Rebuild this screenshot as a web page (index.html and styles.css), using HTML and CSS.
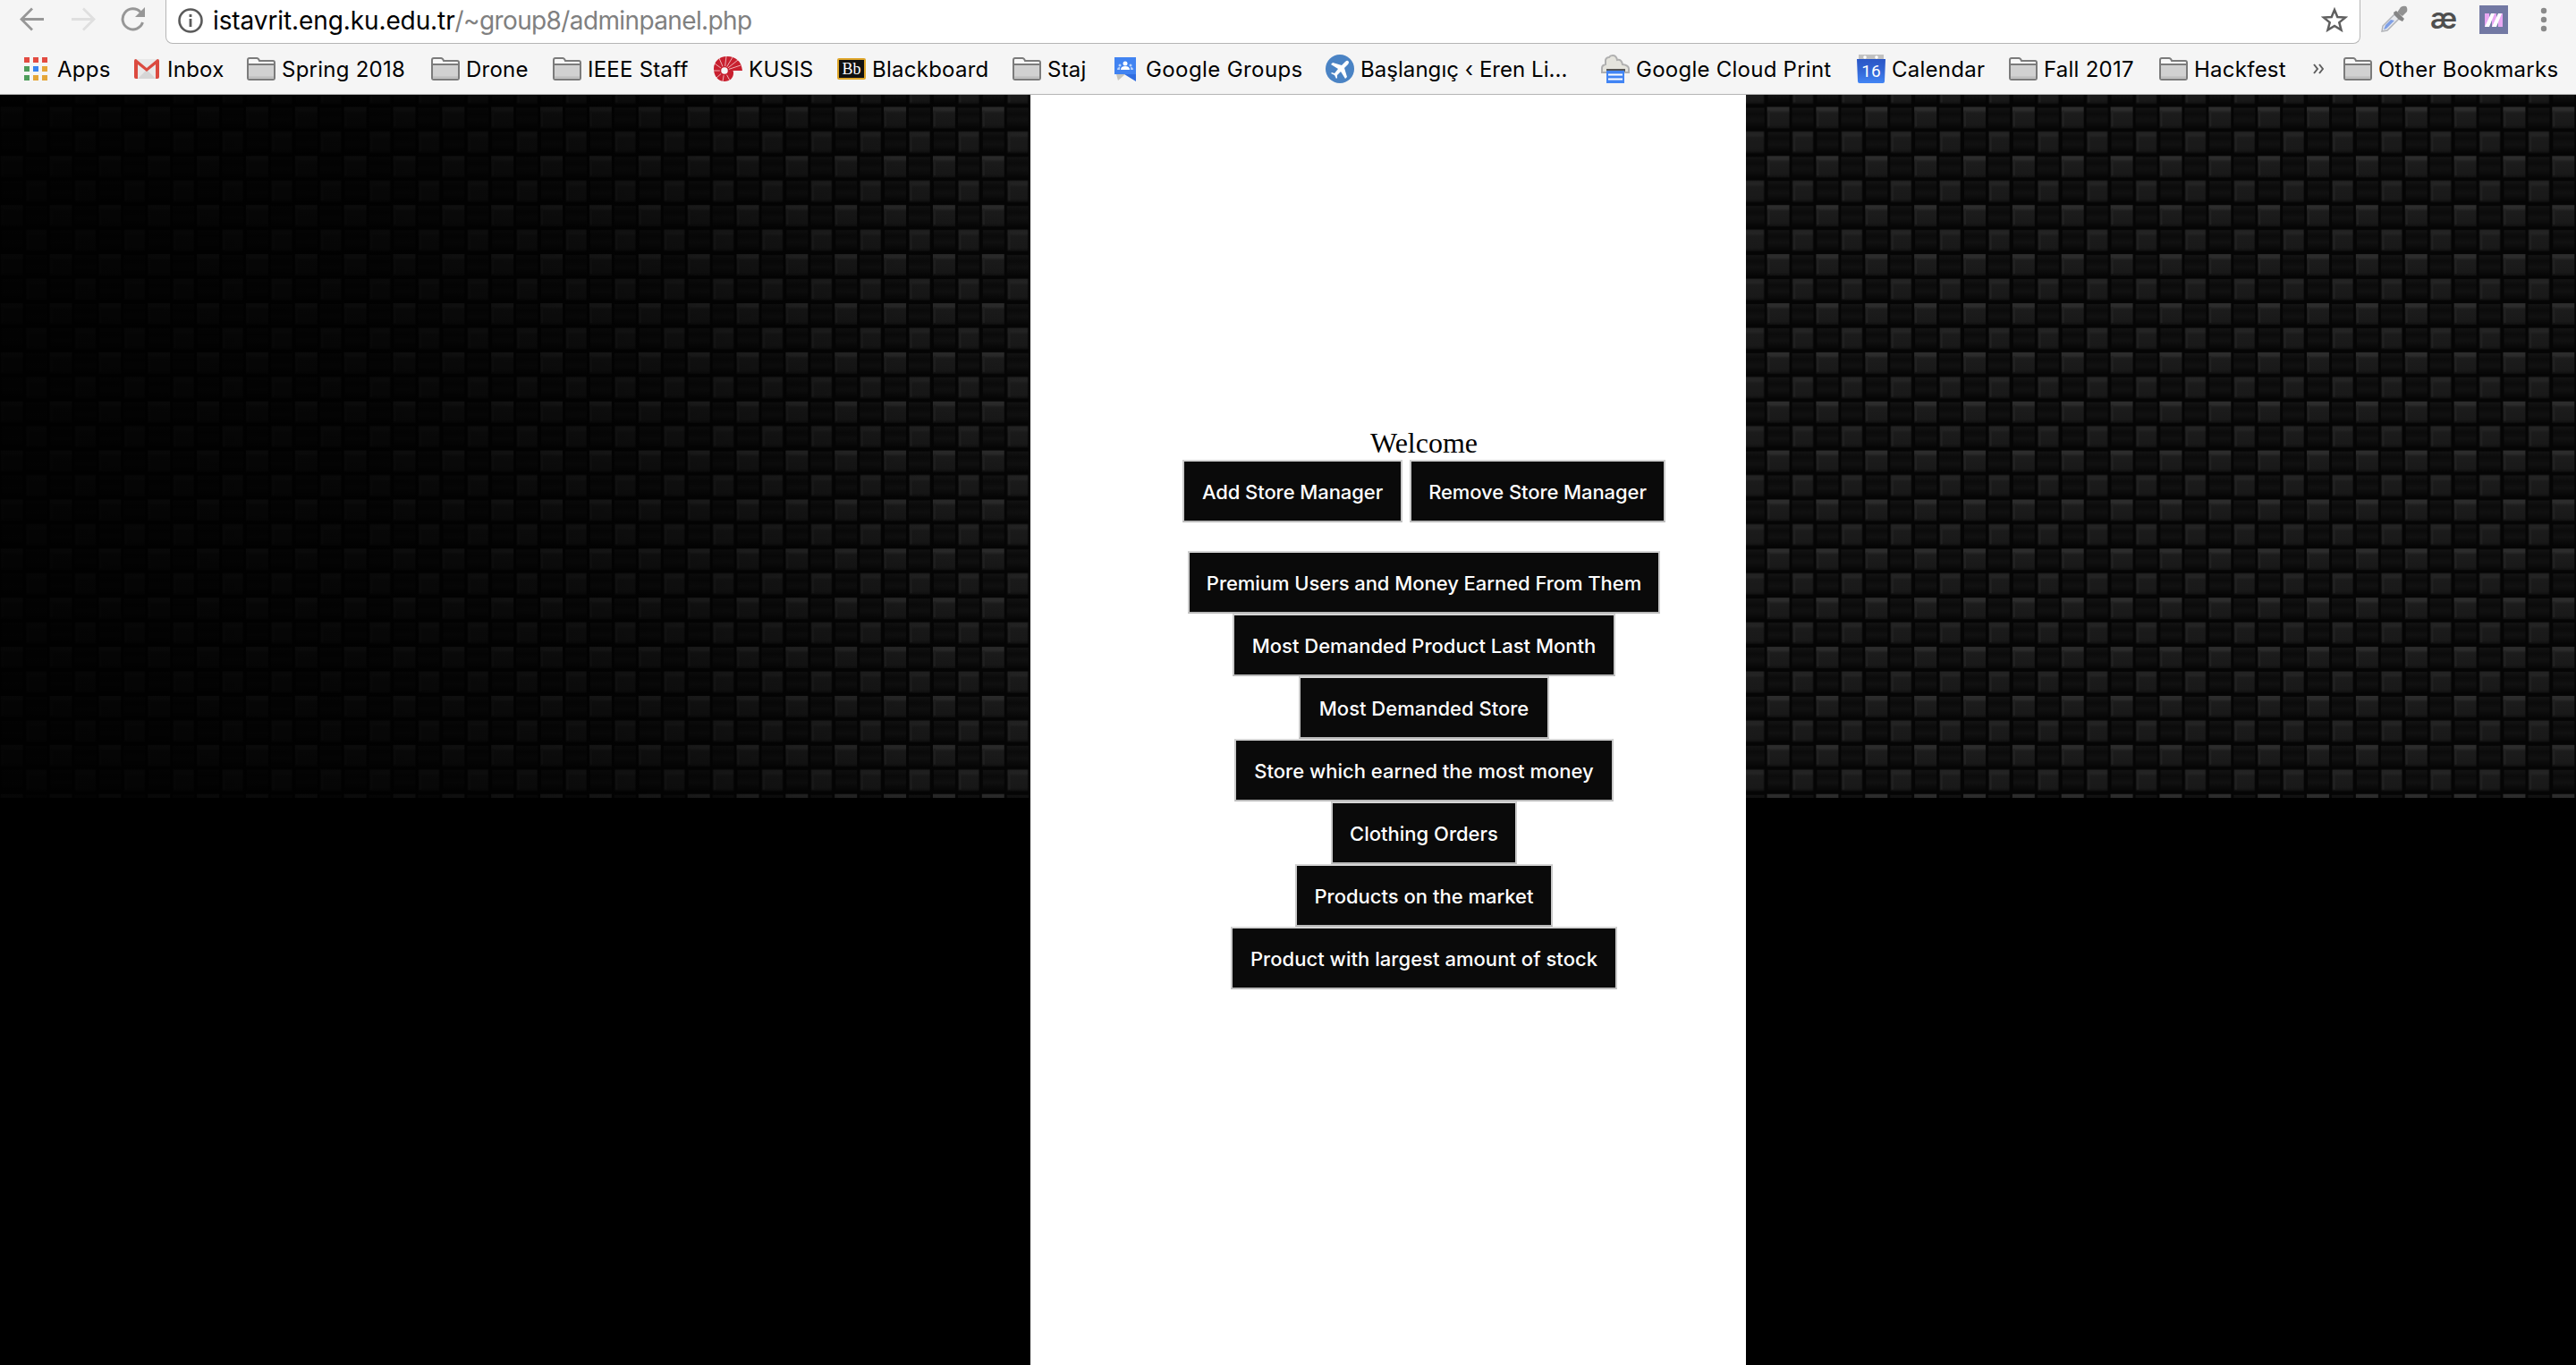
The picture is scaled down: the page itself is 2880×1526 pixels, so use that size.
FILE: index.html
```html
<!DOCTYPE html>
<html lang="en">
<head>
<meta charset="utf-8">
<title>Admin Panel</title>
<link rel="stylesheet" href="styles.css">
</head>
<body>
<svg width="0" height="0" class="defs">
  <defs>
    <linearGradient id="cal" x1="0" y1="0" x2="0" y2="1"><stop offset="0" stop-color="#2a56c6"/><stop offset=".5" stop-color="#3367d6"/><stop offset="1" stop-color="#4285f4"/></linearGradient>
    <linearGradient id="tile" x1="0" y1="0" x2="0" y2="1"><stop offset="0" stop-color="#2c2c2c"/><stop offset=".15" stop-color="#2c2c2c"/><stop offset=".28" stop-color="#1c1c1c"/><stop offset=".85" stop-color="#191919"/><stop offset="1" stop-color="#101010"/></linearGradient>
    <linearGradient id="tileLow" x1="0" y1="0" x2="0" y2="1"><stop offset="0" stop-color="#222"/><stop offset=".18" stop-color="#242424"/><stop offset=".3" stop-color="#1b1b1b"/><stop offset=".85" stop-color="#191919"/><stop offset="1" stop-color="#101010"/></linearGradient>
    <linearGradient id="gap" x1="0" y1="0" x2="0" y2="1"><stop offset="0" stop-color="#131313"/><stop offset=".3" stop-color="#0b0b0b"/><stop offset=".6" stop-color="#111"/><stop offset="1" stop-color="#060606"/></linearGradient>
    <symbol id="folder" viewBox="0 0 32 26"><path d="M1 23V3q0-2 2-2h8q2 0 3 3h15q2 0 2 2v17q0 2-2 2H3q-2 0-2-2z" fill="#f8f8f8" stroke="#7b7b7b" stroke-width="2"/><path d="M2 9h28v15H2z" fill="#d1d1d1"/><path d="M1 8h30" stroke="#7b7b7b" stroke-width="2"/><path d="M2 22.500h28" stroke="#bcbcbc" stroke-width="2"/></symbol>
  </defs>
</svg>
<header class="browser">
  <div class="toolbar">
    <svg class="nav-back" width="28" height="28" viewBox="0 0 28 28"><path d="M27 13.500H3M14 1.500l-12 12 12 12" fill="none" stroke="#979797" stroke-width="2.800"/></svg>
    <svg class="nav-forward" width="28" height="28" viewBox="0 0 28 28"><path d="M1 13.500h24M14 1.500l12 12-12 12" fill="none" stroke="#dfdfdf" stroke-width="2.800"/></svg>
    <svg class="nav-reload" width="28" height="28" viewBox="0 0 28 28"><path d="M24.500 17A11.500 11.500 0 1 1 22 5.500" fill="none" stroke="#979797" stroke-width="3"/><path d="M27 0v11H16z" fill="#979797"/></svg>
    <div class="omnibox">
      <svg class="info" width="28" height="28" viewBox="0 0 28 28"><circle cx="14" cy="14" r="12.500" fill="none" stroke="#5a5a5a" stroke-width="2.600"/><path d="M14 12v9M14 7v3" stroke="#5a5a5a" stroke-width="2.800"/></svg>
      <span class="url"><span class="host">istavrit.eng.ku.edu.tr</span>/~group8/adminpanel.php</span>
      <svg class="star" width="30" height="28" viewBox="0 0 30 28"><path d="M15 3l3.300 8 8.700.6-6.700 5.500 2.200 8.400L15 20.900l-7.500 4.600 2.200-8.400L3 11.600l8.700-.6z" fill="none" stroke="#5f5f5f" stroke-width="2.500"/></svg>
    </div>
    <svg class="ext-dropper" width="32" height="32" viewBox="0 0 32 32"><path d="M2 29l1-6L17 9l5 5L8 28z" fill="#e7e9ee" stroke="#b1b3b8" stroke-width="1.500"/><path d="M4 27l2-5 6-6 4 1-9 9z" fill="#7e9fe6"/><path d="M15 8l3-2 9 9-2 3-4-2-5-5z" fill="#858585"/><path d="M19 8l4-6q3-2 6-1 2 2 1 6l-5 5z" fill="#929292"/></svg>
    <span class="ext-ae">æ</span>
    <svg class="ext-m" width="32" height="32" viewBox="0 0 32 32"><path d="M0 0h32v32H0z" fill="#7278a3"/><path d="M6 9h5v15H6zM14 9h5v15h-5zM21 9h5v15h-5z" fill="#e9a7f2"/><path d="M6 24l7-15h4l-6 15zM14 24l7-15h4l-6 15z" fill="#fff"/></svg>
    <svg class="menu" width="8" height="28" viewBox="0 0 8 28"><g fill="#8a8a8a"><circle cx="4" cy="4" r="3.200"/><circle cx="4" cy="14" r="3.200"/><circle cx="4" cy="24" r="3.200"/></g></svg>
  </div>
  <nav class="bookmarks">
    <a class="bm b-apps"><svg width="26" height="26" viewBox="0 0 26 26"><g fill="#e34b41"><path d="M0 0h6v6H0zM10 0h6v6h-6zM20 0h6v6h-6z"/></g><path d="M0 10h6v6H0zM0 20h6v6H0z" fill="#4e9d5b"/><path d="M10 10h6v6h-6z" fill="#3984f0"/><path d="M20 10h6v6h-6zM10 20h6v6h-6zM20 20h6v6h-6z" fill="#e5a638"/></svg><span>Apps</span></a>
    <a class="bm b-inbox"><svg width="28" height="22" viewBox="0 0 28 22"><rect width="28" height="22" rx="2" fill="#e9e9e9"/><path d="M4 22L14 12l10 10z" fill="#d6d6d6"/><path d="M0 2q0-2 2-2l12 10L26 0q2 0 2 2v18q0 2-2 2h-2V6L14 14 4 6v16H2q-2 0-2-2z" fill="#db4a3f"/></svg><span>Inbox</span></a>
    <a class="bm"><svg width="32" height="26"><use href="#folder"/></svg><span>Spring 2018</span></a>
    <a class="bm"><svg width="32" height="26"><use href="#folder"/></svg><span>Drone</span></a>
    <a class="bm"><svg width="32" height="26"><use href="#folder"/></svg><span>IEEE Staff</span></a>
    <a class="bm"><svg width="32" height="28" viewBox="0 0 32 28"><path d="M32 16C31 5 24 0 15 0 6 0 0 6 0 14s5 14 12 14c6 0 10-4 10-9 0-2 0-3-1-3z" fill="#c8202f"/><g stroke="#f6d5d7" stroke-width=".8"><path d="M12 16L14 0M12 16L6 2M12 16L1 8M12 16H0M12 16L3 24M12 16L10 28M12 16l6 11M12 16L21 1M12 16L27 4M12 16l18-6"/></g><circle cx="12" cy="16" r="4.500" fill="#f5f5f5" stroke="#c8202f" stroke-width="1.500"/></svg><span>KUSIS</span></a>
    <a class="bm"><svg width="32" height="24" viewBox="0 0 32 24"><rect x="1" y="1" width="30" height="22" rx="1" fill="#111" stroke="#dfa62a" stroke-width="2"/><text x="16" y="18" text-anchor="middle" class="bb-text">Bb</text></svg><span>Blackboard</span></a>
    <a class="bm"><svg width="32" height="26"><use href="#folder"/></svg><span>Staj</span></a>
    <a class="bm b-groups"><svg width="24" height="28" viewBox="0 0 24 28"><path d="M0 1h24v19H0z" fill="#4183f1"/><path d="M11 20h13v8z" fill="#2f6de0"/><path d="M2 20h10l-8 7z" fill="#c8c5bc"/><g fill="#fff"><circle cx="12" cy="8" r="2.500"/><path d="M7 15q0-4 5-4t5 4z"/></g><g fill="#b9d3fb"><circle cx="6" cy="10" r="1.500"/><circle cx="18" cy="10" r="1.500"/><path d="M3 15q0-3 3-3v3zM21 15q0-3-3-3v3z"/></g></svg><span>Google Groups</span></a>
    <a class="bm b-eren"><svg width="32" height="32" viewBox="0 0 32 32"><circle cx="16" cy="16" r="16" fill="#4a83c4"/><path d="M25 7q-1-1-3 1l-4 4-10-3-2 2 8 5-4 5-3-1-1 1 4 2 2 4 1-1v-3l4-4 5 8 2-2-3-10 4-4q2-3 0-4z" fill="#fff"/></svg><span>Başlangıç ‹ Eren Li...</span></a>
    <a class="bm"><svg width="32" height="32" viewBox="0 0 32 32"><path d="M1 20v-5q0-3 4-4V6q1-3 4-3 1-2 4-2 4 0 5 5 5-1 6 5 7 1 7 5v4z" fill="#e5e4dd" stroke="#b0b0b0" stroke-width="2"/><path d="M6 16h21v3H6z" fill="#555"/><path d="M6 18h20v14H6z" fill="#4285f4"/><path d="M8 22.500h16M8 27.500h16" stroke="#fff" stroke-width="2"/></svg><span>Google Cloud Print</span></a>
    <a class="bm"><svg width="32" height="32" viewBox="0 0 32 32"><path d="M2 0h28v7H2z" fill="#c1c1c1"/><circle cx="9" cy="3" r="1.800" fill="#fff"/><circle cx="22" cy="3" r="1.800" fill="#fff"/><path d="M0 5h32l-1 25q0 2-2 2H3q-2 0-2-2z" fill="url(#cal)"/><text x="16" y="25" text-anchor="middle" class="cal-text">16</text></svg><span>Calendar</span></a>
    <a class="bm"><svg width="32" height="26"><use href="#folder"/></svg><span>Fall 2017</span></a>
    <a class="bm"><svg width="32" height="26"><use href="#folder"/></svg><span>Hackfest</span></a>
    <a class="bm b-more"><svg width="12" height="12" viewBox="0 0 12 12"><path d="M1 1l4 5-4 5M7 1l4 5-4 5" fill="none" stroke="#5e5e5e" stroke-width="2"/></svg></a>
    <a class="bm"><svg width="32" height="26"><use href="#folder"/></svg><span>Other Bookmarks</span></a>
  </nav>
</header>
<div class="page">
  <svg class="weave" width="2880" height="786">
    <defs>
      <pattern id="carbon" patternUnits="userSpaceOnUse" x="0.600" y="13.500" width="54.860" height="54.870">
        <rect width="54.860" height="54.870" fill="#050505"/>
        <rect x="28" y="1" width="24" height="23" fill="url(#gap)"/>
        <rect x="1" y="28" width="24" height="23" fill="url(#gap)"/>
        <rect x="0" y="0" width="25" height="24" fill="url(#tile)"/>
        <rect x="28.500" y="27.500" width="23" height="24" fill="url(#tileLow)"/>
        <path d="M2 4v18M30.500 31v19" stroke="#222" stroke-width="2"/>
      </pattern>
      <linearGradient id="shade"><stop offset="0" stop-color="#000" stop-opacity=".86"/><stop offset=".14" stop-color="#000" stop-opacity=".75"/><stop offset=".26" stop-color="#000" stop-opacity=".48"/><stop offset=".36" stop-color="#000" stop-opacity=".12"/><stop offset=".42" stop-color="#000" stop-opacity="0"/></linearGradient>
    </defs>
    <rect width="2880" height="786" fill="url(#carbon)"/>
    <rect width="2880" height="786" fill="url(#shade)"/>
  </svg>
  <main class="panel">
    <p class="welcome">Welcome</p>
    <div class="managers"><button class="w-add">Add Store Manager</button><button class="w-remove">Remove Store Manager</button></div>
    <div class="reports">
      <button class="w-premium">Premium Users and Money Earned From Them</button>
      <button class="w-product">Most Demanded Product Last Month</button>
      <button class="w-store">Most Demanded Store</button>
      <button class="w-earned">Store which earned the most money</button>
      <button class="w-clothing">Clothing Orders</button>
      <button class="w-market">Products on the market</button>
      <button class="w-stock">Product with largest amount of stock</button>
    </div>
  </main>
</div>
</body>
</html>
```
FILE: styles.css
```css
* { box-sizing: border-box; }
body { margin: 0; width: 2880px; height: 1526px; overflow: hidden; background: #000; font-family: Inter, "Liberation Sans", sans-serif; }
.defs { position: absolute; }
svg { display: block; flex: none; }

.browser { height: 106px; background: #f5f5f5; border-bottom: 1px solid #b4b4b4; }
.toolbar { display: flex; height: 49px; }
.nav-back { margin: 8px 0 0 22px; }
.nav-forward { margin: 8px 0 0 29px; }
.nav-reload { margin: 8px 0 0 28px; }
.omnibox { display: flex; width: 2454px; height: 49px; margin-left: 22px; padding-left: 13px; background: #fff; border: solid #b5b5b5; border-width: 0 1px 1px; border-radius: 0 0 8px 8px; }
.info { margin-top: 9px; }
.url { margin-left: 11px; font-size: 28px; line-height: 47px; letter-spacing: -.62px; color: #808080; white-space: nowrap; }
.host { letter-spacing: -.1px; color: #000; }
.star { margin: 8px 13px 0 auto; }
.ext-dropper { margin: 6px 0 0 22px; }
.ext-ae { width: 32px; margin: 0 0 0 24px; font: 600 33px/40px Inter, sans-serif; letter-spacing: -1px; color: #4f4f4f; }
.ext-m { margin: 6px 0 0 23px; }
.menu { margin: 8px 0 0 36px; }

.bookmarks { display: grid; height: 56px; grid-template-columns: 123px 126px 206px 136px 180px 138px 196px 114px 236px 308px 286px 170px 168px 172px 34px 260px; padding-left: 27px; }
.bm { display: flex; align-items: center; gap: 7px; font-size: 24px; letter-spacing: .25px; color: #000; white-space: nowrap; }
.b-apps { gap: 11px; }
.b-inbox { gap: 9px; }
.b-groups { gap: 11px; letter-spacing: .4px; }
.b-eren { letter-spacing: .05px; }
.bb-text { font: 18px "Liberation Serif", serif; fill: #fff; letter-spacing: 0; }
.cal-text { font: 19px Roboto, sans-serif; fill: #fff; letter-spacing: 0; }

.page { display: grid; height: 1420px; grid-template-columns: 1152px 800px 928px; }
.weave { grid-area: 1 / 1 / 2 / 4; }
.panel { grid-area: 1 / 2 / 2 / 3; padding: 372px 0 0 80px; background: #fff; text-align: center; }
.welcome { margin: 0 0 2px; font: 32px/34px "Liberation Serif", serif; }
.managers { display: flex; justify-content: center; gap: 8px; margin-bottom: 32px; }
.reports { display: flex; flex-direction: column; align-items: center; }
button { height: 70px; padding: 2px 0 0; border: 2px solid; border-color: #d6d6d6 #cacaca #b9b9b9; background: #0a0a0a; color: #fff; font: 500 22px/64px Inter, sans-serif; white-space: nowrap; }
.w-add { width: 246px; letter-spacing: -.08px; }
.w-remove { width: 286px; letter-spacing: -.08px; }
.w-premium { width: 528px; letter-spacing: -.05px; }
.w-product { width: 428px; }
.w-store { width: 280px; }
.w-earned { width: 424px; }
.w-clothing { width: 208px; }
.w-market { width: 288px; }
.w-stock { width: 432px; letter-spacing: .04px; }
```
